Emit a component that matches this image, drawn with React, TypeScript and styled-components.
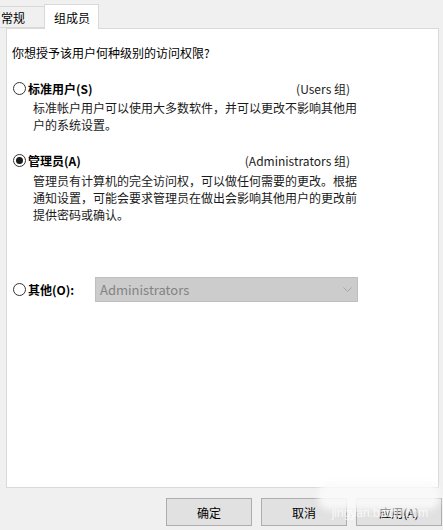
import { type FC } from 'react'
import styled, { createGlobalStyle } from 'styled-components'

const GlobalStyle = createGlobalStyle`
  html, body {
    margin: 0;
    padding: 0;
    background: #f0f0f0;
  }
  body {
    font-family: "Noto Sans CJK SC", "Noto Sans", sans-serif;
    font-size: 12px;
    color: #000;
  }
`

const Window = styled.div`
  position: relative;
  width: 443px;
  height: 530px;
  overflow: hidden;
  background: #f0f0f0;
  display: flex;
  flex-direction: column;
`

const TabStrip = styled.div`
  height: 28px;
  display: flex;
  align-items: flex-end;
  position: relative;
  z-index: 1;
`

const Tab = styled.div<{ $active?: boolean; $first?: boolean }>`
  box-sizing: border-box;
  display: flex;
  align-items: center;
  line-height: 17px;
  height: ${(p) => (p.$active ? '25px' : '22px')};
  margin-bottom: ${(p) => (p.$active ? '-1px' : '0')};
  margin-left: ${(p) => (p.$first ? '-12px' : '0')};
  padding: ${(p) => (p.$active ? '0 8px 0 9px' : '0 19px 0 12px')};
  background: ${(p) => (p.$active ? '#ffffff' : '#f0f0f0')};
  border: 1px solid #d9d9d9;
  border-bottom: ${(p) => (p.$active ? 'none' : '1px solid #d9d9d9')};
  border-right: ${(p) => (p.$active ? '1px solid #d9d9d9' : 'none')};
`

const Panel = styled.div`
  box-sizing: border-box;
  height: 460px;
  margin: 0 4px 0 6px;
  padding: 15px 0 0 5px;
  background: #ffffff;
  border: 1px solid #d9d9d9;
  display: flex;
  flex-direction: column;
  line-height: 17px;
`

const Question = styled.div`
  height: 17px;
`

const OptionRow = styled.div<{ $top: number }>`
  display: flex;
  align-items: center;
  width: 337px;
  margin: ${(p) => p.$top}px 0 0 1px;
  justify-content: space-between;
`

const RadioLabel = styled.div`
  display: flex;
  align-items: center;
  gap: 2px;
`

const RadioCircle = styled.span<{ $checked?: boolean }>`
  box-sizing: border-box;
  width: 13px;
  height: 13px;
  border-radius: 50%;
  border: 1px solid #333333;
  background: #ffffff;
  display: flex;
  align-items: center;
  justify-content: center;

  &::after {
    content: '';
    display: ${(p) => (p.$checked ? 'block' : 'none')};
    width: 7px;
    height: 7px;
    border-radius: 50%;
    background: #1a1a1a;
  }
`

const LabelText = styled.span<{ $width?: number }>`
  font-weight: 700;
  width: ${(p) => (p.$width ? `${p.$width}px` : 'auto')};
`

const GroupText = styled.span`
  color: #1a1a1a;
`

const Description = styled.div<{ $top: number }>`
  width: 330px;
  margin: ${(p) => p.$top}px 0 0 21px;
  color: #1a1a1a;
`

const OtherRow = styled.div`
  display: flex;
  align-items: center;
  margin: 54px 0 0 1px;
`

const Combo = styled.div`
  box-sizing: border-box;
  width: 263px;
  height: 25px;
  display: flex;
  align-items: center;
  justify-content: space-between;
  padding: 0 5px 0 4px;
  background: #cccccc;
  border: 1px solid #bfbfbf;
  color: #838383;
  font-size: 13px;
`

const ButtonRow = styled.div`
  display: flex;
  justify-content: flex-end;
  gap: 9px;
  padding: 10px 1px 0 0;
`

const DialogButton = styled.button`
  box-sizing: border-box;
  width: 86px;
  height: 28px;
  background: #e1e1e1;
  border: 1px solid #adadad;
  font-family: "Noto Sans CJK SC", "Noto Sans", sans-serif;
  font-size: 12px;
  color: #000;
  padding: 0;
`

const Watermark = styled.div`
  position: absolute;
  left: 318px;
  top: 482px;
  width: 124px;
  height: 46px;
  pointer-events: none;
  display: flex;
  align-items: flex-end;
  justify-content: center;

  &::before {
    content: '';
    position: absolute;
    left: 0;
    top: 0;
    width: 122px;
    height: 28px;
    border-radius: 12px;
    background: rgba(250, 250, 250, 0.9);
    filter: blur(3px);
  }
`

const WatermarkText = styled.span`
  position: relative;
  font-family: "Liberation Sans", sans-serif;
  font-size: 12px;
  color: rgba(255, 255, 255, 0.75);
  margin-bottom: 8px;
`

const Chevron: FC = () => (
  <svg width="9" height="6" viewBox="0 0 9 6">
    <polyline points="0.5,0.5 4.5,4.5 8.5,0.5" fill="none" stroke="#a6a6a6" strokeWidth="1" />
  </svg>
)

export default function App() {
  return (
    <Window>
      <GlobalStyle />
      <TabStrip>
        <Tab $first>常规</Tab>
        <Tab $active>组成员</Tab>
      </TabStrip>
      <Panel>
        <Question>你想授予该用户何种级别的访问权限?</Question>

        <OptionRow $top={19}>
          <RadioLabel>
            <RadioCircle />
            <LabelText>标准用户(S)</LabelText>
          </RadioLabel>
          <GroupText>(Users 组)</GroupText>
        </OptionRow>
        <Description $top={2}>
          标准帐户用户可以使用大多数软件，并可以更改不影响其他用户的系统设置。
        </Description>

        <OptionRow $top={19}>
          <RadioLabel>
            <RadioCircle $checked />
            <LabelText>管理员(A)</LabelText>
          </RadioLabel>
          <GroupText>(Administrators 组)</GroupText>
        </OptionRow>
        <Description $top={3}>
          管理员有计算机的完全访问权，可以做任何需要的更改。根据通知设置，可能会要求管理员在做出会影响其他用户的更改前提供密码或确认。
        </Description>

        <OtherRow>
          <RadioLabel>
            <RadioCircle />
            <LabelText $width={67}>其他(O):</LabelText>
          </RadioLabel>
          <Combo>
            <span>Administrators</span>
            <Chevron />
          </Combo>
        </OtherRow>
      </Panel>
      <ButtonRow>
        <DialogButton>确定</DialogButton>
        <DialogButton>取消</DialogButton>
        <DialogButton>应用(A)</DialogButton>
      </ButtonRow>
      <Watermark>
        <WatermarkText>jingyan.baidu.com</WatermarkText>
      </Watermark>
    </Window>
  )
}
